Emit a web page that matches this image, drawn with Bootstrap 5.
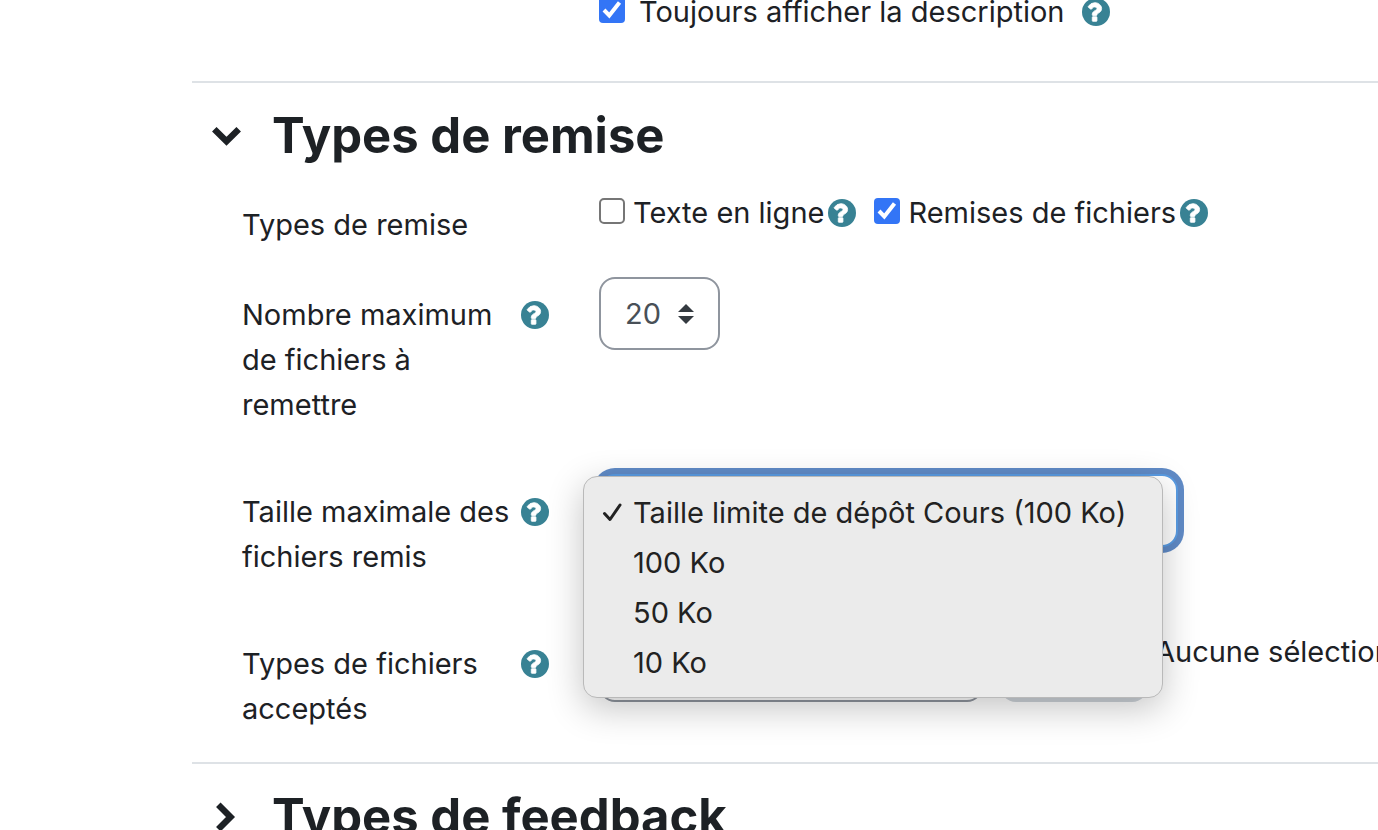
<!DOCTYPE html>
<html lang="fr">
<head>
<meta charset="utf-8">
<meta name="viewport" content="width=device-width, initial-scale=1">
<title>Paramètres du devoir</title>
<link href="https://cdn.jsdelivr.net/npm/bootstrap@5.3.0/dist/css/bootstrap.min.css" rel="stylesheet">
<style>
  body { font: 400 29px/45px Inter, "Liberation Sans", sans-serif; color: #1d2125; background: #fff; }
  .settings-page { padding-left: 192px; }
  .scrolled-row { margin-top: -11px; margin-bottom: 47px; padding-left: 20px; }
  .form-section { border-top: 2px solid #dee2e6; padding: 23px 0 14px 20px; }
  .section-title { font-size: 49px; line-height: 60px; font-weight: 700; margin-bottom: 21px; }
  .section-toggle { color: inherit; width: 30px; margin-right: 30px; }
  .setting { display: grid; grid-template-columns: 357px minmax(0, 1fr); padding-left: 30px; margin-bottom: 30px; }
  .setting:last-child { margin-bottom: 0; }
  .setting-name { padding: 15px 50px 17px 0; gap: 8px; }
  .setting-name > label, .setting-name > span { width: 271px; }
  .help-btn { width: 28px; height: 28px; color: #388294; }
  .help-btn svg, .section-toggle svg { display: block; }
  .setting-name .help-btn { margin-top: 9px; }
  .field-row { padding-top: 3px; }
  .tick { appearance: none; width: 26px; height: 26px; margin: 0 0 4px; border: 2px solid #767676; border-radius: 5px; background: #fff; }
  .tick:checked { border: 0; border-radius: 4px; background: #3375f6 url("data:image/svg+xml,%3Csvg xmlns='http://www.w3.org/2000/svg' viewBox='0 0 26 26'%3E%3Cpath d='M5 13l5.300 5.500L20.500 5.500' fill='none' stroke='%23fff' stroke-width='4'/%3E%3C/svg%3E"); }
  .choice { display: flex; align-items: center; margin-right: 18px; }
  .wide-gap { gap: 14px; }
  .moodle-field { height: 73px; border: 2px solid #8f959e; border-radius: 16px; color: #495057; background: #fff; padding: 0 24px; }
  .moodle-select { appearance: none; background: #fff url("data:image/svg+xml,%3Csvg xmlns='http://www.w3.org/2000/svg' viewBox='0 0 16 20'%3E%3Cpath fill='%23343a40' d='M8 0l8 8H0zM8 20l8-8H0z'/%3E%3C/svg%3E") no-repeat right 24px center / 16px 20px; }
  .count-select { width: 121px; }
  .size-wrap { width: 579px; }
  .size-select { border-color: #5a9ce3; box-shadow: 0 0 0 6px #608bc7; }
  .size-menu { left: -16px; top: 2px; width: 580px; padding: 10px 0; background: #ebebeb; border: 1px solid #b9b9b9; border-radius: 14px; box-shadow: 0 10px 36px rgba(0,0,0,.24); z-index: 5; color: #222; }
  .size-option { height: 50px; padding-left: 18px; color: inherit; }
  .size-option svg { width: 21px; margin-right: 10px; }
  .types-input { width: 384px; }
  .pick-btn { height: 73px; width: 148px; border-radius: 16px; background: #ced4da; margin: 0 7px 0 17px; }
</style>
</head>
<body class="vh-100 overflow-hidden">
<svg class="d-none" aria-hidden="true">
  <symbol id="help" viewBox="128 128 1536 1536"><circle cx="896" cy="896" r="768" fill="currentColor"/><path fill="#fff" stroke="#fff" stroke-width="44" transform="translate(52 0)" d="M896 1376v-192q0-14-9-23t-23-9h-192q-14 0-23 9t-9 23v192q0 14 9 23t23 9h192q14 0 23-9t9-23zM1152 704q0-88-55.500-163t-138.500-116-170-41q-243 0-371 213-15 24 8 42l132 100q7 6 19 6 16 0 25-12 53-68 86-92 34-24 86-24 48 0 85.500 26t37.500 59q0 38-20 61t-68 45q-63 28-115.500 86.500t-52.500 125.500v36q0 14 9 23t23 9h192q14 0 23-9t9-23q0-19 21.500-49.500t54.500-49.500q32-18 49-28.500t46-35 44.500-48 28-60.500 12.500-81z"/></symbol>
</svg>
<main class="settings-page">
  <div class="scrolled-row">
    <div class="setting">
      <div></div>
      <div class="d-flex align-items-center wide-gap">
        <input class="tick" type="checkbox" id="showdesc" checked>
        <label class="me-1" for="showdesc">Toujours afficher la description</label>
        <button class="btn p-0 border-0 help-btn" type="button" aria-label="Aide"><svg width="28" height="28"><use href="#help"/></svg></button>
      </div>
    </div>
  </div>

  <section class="form-section">
    <h2 class="section-title d-flex align-items-center">
      <button class="btn p-0 border-0 section-toggle" type="button" aria-label="Replier"><svg width="30" height="20" viewBox="0 0 30 20"><path d="M2.300 3.200L14.500 15.200L26.700 3.200" fill="none" stroke="currentColor" stroke-width="6.400" stroke-linejoin="miter"/></svg></button>
      Types de remise
    </h2>

    <div class="setting">
      <div class="setting-name pb-0"><span>Types de remise</span></div>
      <div class="field-row d-flex align-items-center align-self-start">
        <div class="choice">
          <input class="tick" type="checkbox" id="online"><label class="ms-2" for="online">Texte en ligne</label>
          <button class="btn p-0 border-0 help-btn ms-1" type="button" aria-label="Aide"><svg width="28" height="28"><use href="#help"/></svg></button>
        </div>
        <div class="choice">
          <input class="tick" type="checkbox" id="files" checked><label class="ms-2" for="files">Remises de fichiers</label>
          <button class="btn p-0 border-0 help-btn ms-1" type="button" aria-label="Aide"><svg width="28" height="28"><use href="#help"/></svg></button>
        </div>
      </div>
    </div>

    <div class="setting">
      <div class="setting-name d-flex">
        <label for="maxfiles">Nombre maximum de fichiers à remettre</label>
        <button class="btn p-0 border-0 help-btn" type="button" aria-label="Aide"><svg width="28" height="28"><use href="#help"/></svg></button>
      </div>
      <div><select class="moodle-field moodle-select count-select d-block" id="maxfiles"><option>20</option></select></div>
    </div>

    <div class="setting">
      <div class="setting-name d-flex">
        <label for="maxsize">Taille maximale des fichiers remis</label>
        <button class="btn p-0 border-0 help-btn" type="button" aria-label="Aide"><svg width="28" height="28"><use href="#help"/></svg></button>
      </div>
      <div class="position-relative size-wrap">
        <select class="moodle-field moodle-select size-select d-block w-100" id="maxsize"><option></option></select>
        <div class="size-menu position-absolute" role="listbox" aria-label="Taille maximale">
          <button type="button" role="option" aria-selected="true" class="size-option d-flex align-items-center w-100 border-0 bg-transparent"><svg height="22" viewBox="0 0 21 22"><path d="M2.500 12.500L8 18.500L18 4" fill="none" stroke="currentColor" stroke-width="3" stroke-linecap="round" stroke-linejoin="round"/></svg>Taille limite de dépôt Cours (100 Ko)</button>
          <button type="button" role="option" class="size-option d-flex align-items-center w-100 border-0 bg-transparent"><svg height="22"></svg>100 Ko</button>
          <button type="button" role="option" class="size-option d-flex align-items-center w-100 border-0 bg-transparent"><svg height="22"></svg>50 Ko</button>
          <button type="button" role="option" class="size-option d-flex align-items-center w-100 border-0 bg-transparent"><svg height="22"></svg>10 Ko</button>
        </div>
      </div>
    </div>

    <div class="setting">
      <div class="setting-name d-flex">
        <label for="filetypes">Types de fichiers acceptés</label>
        <button class="btn p-0 border-0 help-btn" type="button" aria-label="Aide"><svg width="28" height="28"><use href="#help"/></svg></button>
      </div>
      <div class="field-row d-flex align-items-start text-nowrap overflow-hidden">
        <input class="moodle-field types-input flex-shrink-0" id="filetypes" type="text">
        <button class="pick-btn border-0 flex-shrink-0" type="button" aria-label="Choisir"></button>
        <span>Aucune sélection</span>
      </div>
    </div>
  </section>

  <section class="form-section">
    <h2 class="section-title d-flex align-items-center">
      <button class="btn p-0 border-0 section-toggle" type="button" aria-label="Déplier"><svg width="30" height="30" viewBox="0 0 30 30"><path d="M6.300 2.800L18.500 15L6.300 27.200" fill="none" stroke="currentColor" stroke-width="6.400"/></svg></button>
      Types de feedback
    </h2>
  </section>
</main>
<script src="https://cdn.jsdelivr.net/npm/bootstrap@5.3.0/dist/js/bootstrap.bundle.min.js"></script>
</body>
</html>
